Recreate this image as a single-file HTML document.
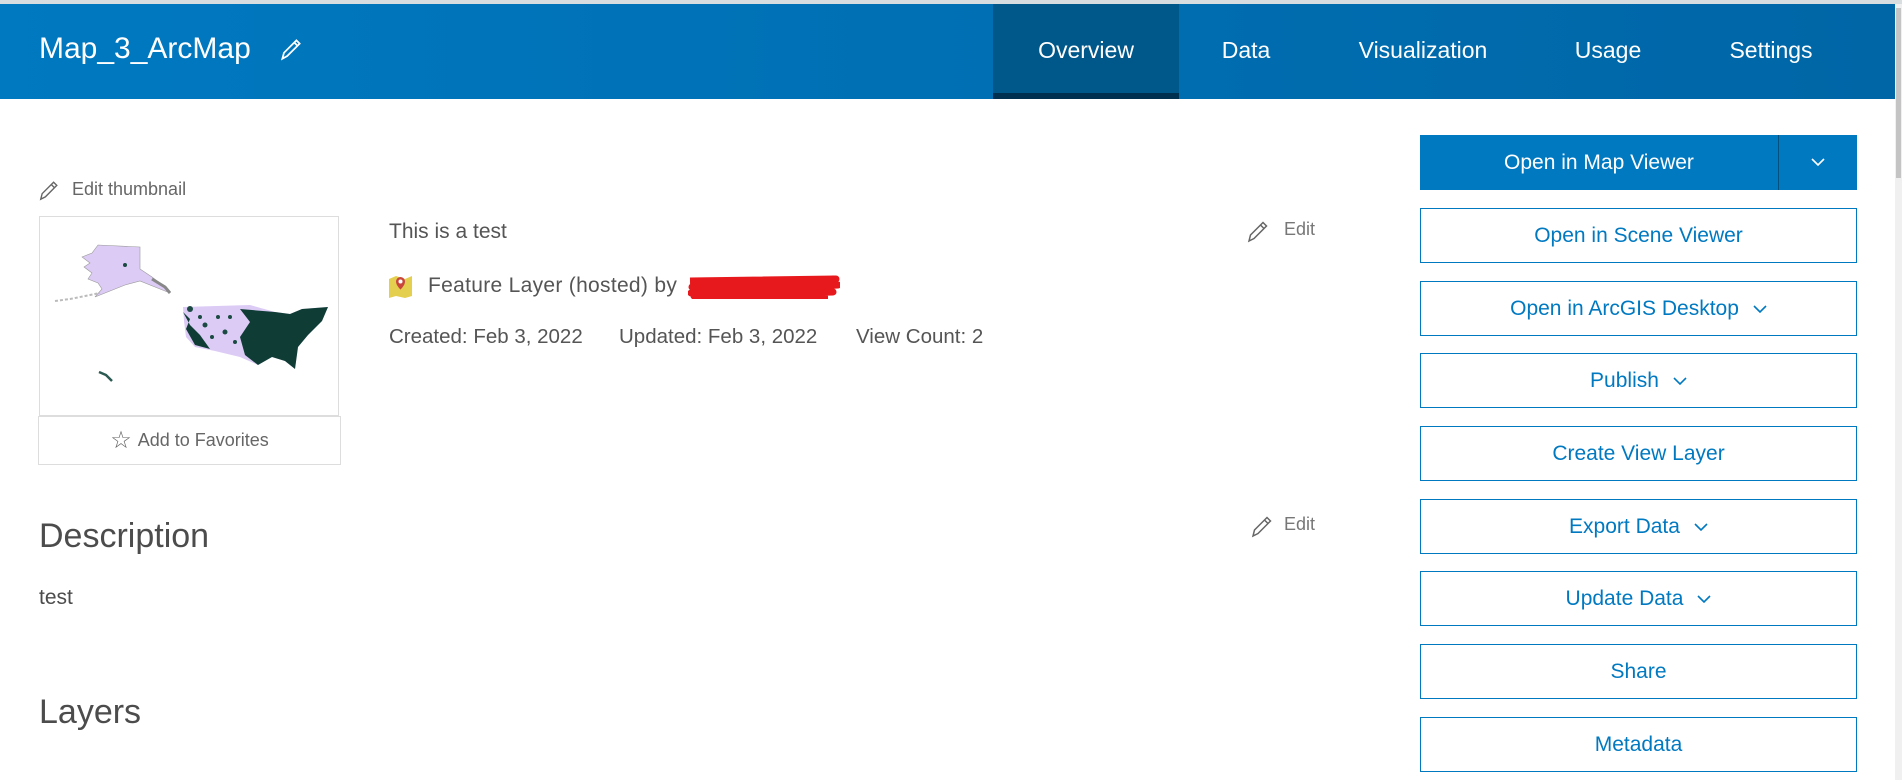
<!DOCTYPE html>
<html><head><meta charset="utf-8"><style>
*{margin:0;padding:0;box-sizing:border-box}
body{width:1902px;height:780px;overflow:hidden;background:#fff;font-family:"Liberation Sans",sans-serif;color:#4c4c4c;position:relative}
.a{position:absolute;white-space:nowrap}
.hdr{position:absolute;left:0;top:4px;width:1895px;height:95px;background:linear-gradient(90deg,#0079c1,#0066a6)}
.top{position:absolute;left:0;top:0;width:1902px;height:4px;background:#d8dde0}
.sb{position:absolute;right:0;top:4px;width:7px;height:776px;background:#f0f0f0}
.sb i{position:absolute;left:1px;top:4px;width:5px;height:170px;background:#c4c4c4}
.tab{position:absolute;top:37px;color:#fff;font-size:23px;transform:translateX(-50%)}
.ov{position:absolute;left:993px;top:4px;width:186px;height:95px;background:#00578a;border-bottom:6px solid #00304f}
.btn{position:absolute;left:1420px;width:437px;height:55px;border:1.5px solid #0079c1;color:#0079c1;font-size:21px;display:flex;align-items:center;justify-content:center}
.btn svg{margin-left:14px}
.t{font-size:20px;color:#555}
</style></head><body>
<div class="top"></div>
<div class="hdr"></div>
<div class="ov"></div>
<div class="a" style="left:39px;top:32px;font-size:30px;color:#fff">Map_3_ArcMap</div>
<svg class="a" style="left:278px;top:36px" width="26" height="26" viewBox="0 0 24 24"><path d="M4 21l1.5-5.5L17 4l3 3L8.5 18.5z M15 6l3 3" fill="none" stroke="#fff" stroke-width="1.6"/></svg>
<div class="tab" style="left:1086px">Overview</div>
<div class="tab" style="left:1246px">Data</div>
<div class="tab" style="left:1423px">Visualization</div>
<div class="tab" style="left:1608px">Usage</div>
<div class="tab" style="left:1771px">Settings</div>
<div class="sb"><i></i></div>

<svg class="a" style="left:38px;top:179px" width="22" height="22" viewBox="0 0 24 24"><path d="M3 22l1.5-6L17 3.5l3.5 3.5L8 19.5z M14.5 6l3.5 3.5" fill="none" stroke="#666" stroke-width="1.5"/></svg>
<div class="a" style="left:72px;top:179px;font-size:18px;color:#666">Edit thumbnail</div>
<div class="a" style="left:39px;top:216px;width:300px;height:200px;border:1px solid #ddd">
<svg width="298" height="198" viewBox="0 0 298 198">
<path d="M42 40 L52 36 L58 28 L100 30 L100 52 L112 60 L125 70 L130 76 L115 70 L100 64 L85 68 L70 74 L55 80 L62 72 L58 66 L48 62 L52 56 L44 50 L50 46 Z" fill="#dccbf5" stroke="#999" stroke-width="0.6"/>
<path d="M15 84 L30 82 L50 78 L60 76" stroke="#bbb" stroke-width="2" fill="none" stroke-dasharray="3 2"/>
<path d="M112 62 L125 70 L130 76" stroke="#888" stroke-width="3" fill="none"/>
<path d="M143 90 L210 88 L235 95 L250 97 L262 92 L288 90 L282 104 L268 118 L258 130 L255 152 L245 144 L232 140 L218 148 L200 140 L175 134 L155 130 L146 120 L144 104 Z" fill="#dccbf5"/>
<path d="M200 92 L235 95 L250 97 L262 92 L288 90 L282 104 L268 118 L258 130 L255 152 L245 144 L232 140 L218 148 L205 138 L200 120 L210 105 Z" fill="#0f3d36"/>
<path d="M143 95 L150 102 L146 112 L155 128 L170 132 L160 118 L150 108 Z" fill="#0f3d36"/>
<g fill="#1a4a42"><circle cx="150" cy="92" r="3"/><circle cx="165" cy="108" r="2.5"/><circle cx="178" cy="100" r="2"/><circle cx="160" cy="100" r="2"/><circle cx="185" cy="115" r="2.5"/><circle cx="172" cy="120" r="2"/><circle cx="190" cy="100" r="2"/><circle cx="195" cy="125" r="2"/><circle cx="85" cy="48" r="2"/></g>
<path d="M59 155 L66 158 L72 164" stroke="#2a5a52" stroke-width="2.5" fill="none"/>
</svg></div>
<div class="a" style="left:38px;top:416px;width:303px;height:49px;border:1px solid #ddd;display:flex;align-items:center;justify-content:center;font-size:18px;color:#666">
<span style="font-size:24px;margin-right:6px;color:#666">☆</span>Add to Favorites</div>

<div class="a" style="left:389px;top:220px;font-size:21px;color:#555">This is a test</div>
<svg class="a" style="left:388px;top:274px" width="25" height="25" viewBox="0 0 25 25"><path d="M1 5 L8 2 L17 5 L24 2 L24 22 L17 24 L8 22 L1 24 Z" fill="#e5cf4e"/><path d="M12.5 3 a4.5 4.5 0 0 1 4.5 4.5 c0 4 -4.5 8 -4.5 8 c0 0 -4.5 -4 -4.5 -8 a4.5 4.5 0 0 1 4.5 -4.5z" fill="#c9463d"/><circle cx="12.5" cy="7.5" r="2" fill="#fff"/></svg>
<div class="a" style="left:428px;top:274px;font-size:21px;color:#555;letter-spacing:0.3px">Feature Layer (hosted) by</div>
<svg class="a" style="left:688px;top:275px" width="152" height="24"><path d="M2 6 L148 4 L4 12 L150 10 L3 18 L145 17 L6 21 L140 21" stroke="#e8191c" stroke-width="7" fill="none" stroke-linejoin="round"/></svg>
<div class="a t" style="left:389px;top:325px;font-size:20.5px">Created: Feb 3, 2022</div>
<div class="a t" style="left:619px;top:325px;font-size:20.5px">Updated: Feb 3, 2022</div>
<div class="a t" style="left:856px;top:325px;font-size:20.5px">View Count: 2</div>

<svg class="a" style="left:1246px;top:219px" width="24" height="24" viewBox="0 0 24 24"><path d="M3 22l1.5-6L17 3.5l3.5 3.5L8 19.5z M14.5 6l3.5 3.5" fill="none" stroke="#666" stroke-width="1.5"/></svg>
<div class="a" style="left:1284px;top:219px;font-size:18px;color:#777">Edit</div>
<svg class="a" style="left:1250px;top:514px" width="24" height="24" viewBox="0 0 24 24"><path d="M3 22l1.5-6L17 3.5l3.5 3.5L8 19.5z M14.5 6l3.5 3.5" fill="none" stroke="#666" stroke-width="1.5"/></svg>
<div class="a" style="left:1284px;top:514px;font-size:18px;color:#777">Edit</div>

<div class="a" style="left:39px;top:517px;font-size:34px;color:#4c4c4c">Description</div>
<div class="a" style="left:39px;top:586px;font-size:21px;color:#4c4c4c">test</div>
<div class="a" style="left:39px;top:693px;font-size:34px;color:#4c4c4c">Layers</div>

<div class="a" style="left:1420px;top:135px;width:437px;height:55px;background:#0079c1;color:#fff;font-size:21px">
<div style="position:absolute;left:0;top:0;width:358px;height:55px;display:flex;align-items:center;justify-content:center">Open in Map Viewer</div>
<div style="position:absolute;left:358px;top:0;width:1px;height:55px;background:#00507f"></div>
<svg style="position:absolute;left:390px;top:21px" width="16" height="12"><path d="M2 3 L8 9 L14 3" stroke="#fff" stroke-width="1.6" fill="none"/></svg>
</div>
<div class="btn" style="top:208px">Open in Scene Viewer</div>
<div class="btn" style="top:281px">Open in ArcGIS Desktop<svg width="14" height="10"><path d="M1 2 L7 8 L13 2" stroke="#0079c1" stroke-width="1.6" fill="none"/></svg></div>
<div class="btn" style="top:353px">Publish<svg width="14" height="10"><path d="M1 2 L7 8 L13 2" stroke="#0079c1" stroke-width="1.6" fill="none"/></svg></div>
<div class="btn" style="top:426px">Create View Layer</div>
<div class="btn" style="top:499px">Export Data<svg width="14" height="10"><path d="M1 2 L7 8 L13 2" stroke="#0079c1" stroke-width="1.6" fill="none"/></svg></div>
<div class="btn" style="top:571px">Update Data<svg width="14" height="10"><path d="M1 2 L7 8 L13 2" stroke="#0079c1" stroke-width="1.6" fill="none"/></svg></div>
<div class="btn" style="top:644px">Share</div>
<div class="btn" style="top:717px">Metadata</div>
</body></html>
